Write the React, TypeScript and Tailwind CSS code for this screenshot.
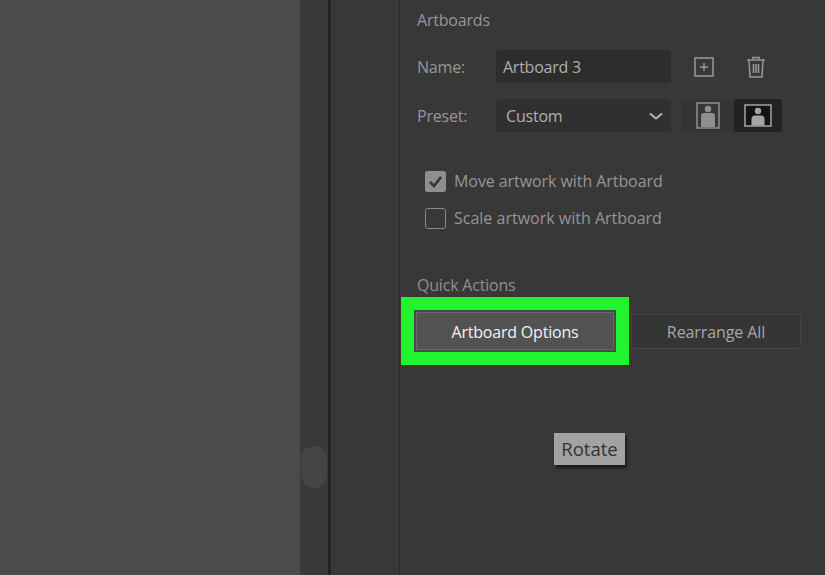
export default function App() {
  return (
    <div className="flex h-[575px] w-[825px] overflow-hidden bg-[#383838] font-['Open_Sans',sans-serif] text-[16px]">
      <div className="w-[300px] shrink-0 bg-[#4b4b4b]" />
      <div className="flex w-[28px] shrink-0 items-start bg-[#393939] pt-[446px]">
        <div className="ml-[1px] h-[42px] w-[26px] rounded-[13px] bg-[#444444]" />
      </div>
      <div className="w-[3px] shrink-0 bg-[#232323]" />
      <div className="w-[69px] shrink-0 border-r border-r-[#2a2a2a] bg-[#383838]" />
      <div className="relative flex min-w-0 flex-1 flex-col">
        <div className="pl-[17px] pt-[9px] leading-[22px] tracking-[-0.2px] text-[#969696]">Artboards</div>
        <div className="mt-[19px] flex h-[33px] items-center pl-[17px]">
          <span className="w-[79px] pt-[1px] tracking-[-0.2px] text-[#969696]">Name:</span>
          <div className="flex h-[33px] w-[175px] items-center rounded-[3px] bg-[#2d2d2d] pl-[7px] tracking-[-0.25px] text-[#b0b0b0]">Artboard 3</div>
          <svg className="ml-[22px]" width="22" height="22" viewBox="0 0 22 22" fill="none" stroke="#959595">
            <rect x="2" y="2" width="18" height="18" strokeWidth="1.6" />
            <path d="M11 7v8M7 11h8" strokeWidth="1.5" />
          </svg>
          <svg className="ml-[30px]" width="22" height="24" viewBox="0 0 22 24" fill="none" stroke="#959595" strokeWidth="1.6">
            <path d="M2 5h18M8 5V2.500h6V5M4 5l1 17h12l1-17M8.500 9v9M11 9v9M13.500 9v9" />
          </svg>
        </div>
        <div className="mt-[16px] flex h-[33px] items-center pl-[17px]">
          <span className="w-[79px] pt-[1px] tracking-[-0.2px] text-[#969696]">Preset:</span>
          <div className="flex h-[33px] w-[175px] items-center justify-between rounded-[3px] bg-[#303030] pl-[10px] pr-[8px] pt-[1px] tracking-[-0.2px] text-[#b0b0b0]">
            Custom
            <svg width="14" height="9" viewBox="0 0 14 9" fill="none" stroke="#b5b5b5" strokeWidth="2">
              <path d="M1 1.500l6 5 6-5" />
            </svg>
          </div>
          <div className="ml-[11px] flex h-[33px] w-[52px] items-center justify-center rounded-l-[3px] bg-[#343434]">
            <svg width="24" height="27" viewBox="0 0 24 27">
              <rect x="1" y="1" width="22" height="25" fill="#383838" stroke="#8f8f8f" strokeWidth="1.500" />
              <circle cx="12" cy="7" r="3.200" fill="#8f8f8f" />
              <path d="M5 25v-11q0-3 3-3h8q3 0 3 3v11z" fill="#8f8f8f" />
            </svg>
          </div>
          <div className="flex h-[33px] w-[48px] items-center justify-center rounded-[3px] bg-[#222222]">
            <svg width="28" height="23" viewBox="0 0 28 23">
              <rect x="1" y="1" width="26" height="21" fill="#141414" stroke="#a5a5a5" strokeWidth="1.500" />
              <circle cx="14" cy="7" r="3.200" fill="#a5a5a5" />
              <path d="M7.500 21.500v-6q0-4 3.500-4h6q3.500 0 3.500 4v6z" fill="#a5a5a5" />
            </svg>
          </div>
        </div>
        <div className="mt-[38px] flex h-[22px] items-center gap-[8px] pl-[25px] tracking-[-0.07px] text-[#969696]">
          <svg width="21" height="21" viewBox="0 0 21 21">
            <rect width="21" height="21" rx="2.500" fill="#8f8f8f" />
            <path d="M5 11l4 4 7-9" fill="none" stroke="#333333" strokeWidth="2.600" />
          </svg>
          Move artwork with Artboard
        </div>
        <div className="mt-[15px] flex h-[22px] items-center gap-[8px] pl-[25px] text-[#969696]">
          <div className="h-[21px] w-[21px] rounded-[3px] border border-[#8a8a8a]" />
          Scale artwork with Artboard
        </div>
        <div className="ml-[4px] mr-[22px] mt-[15px] h-px bg-[#3c3c3c]" />
        <div className="mt-[29px] pl-[17px] leading-[22px] tracking-[-0.2px] text-[#8f8f8f]">Quick Actions</div>
        <div className="mt-[1px] flex items-center">
          <div className="ml-[1px] bg-[#20f42f] p-[13px]">
            <div className="flex h-[42px] w-[202px] items-center justify-center border-[3px] border-[#484848] bg-[#525252] pt-[1px] tracking-[-0.2px] text-[#f2f2f2] outline outline-[1px] -outline-offset-[3px] outline-[#686868]">Artboard Options</div>
          </div>
          <div className="ml-[2px] flex h-[35px] w-[170px] items-center justify-center rounded-[3px] border border-[#454545] bg-[#353535] pt-[1px] tracking-[-0.1px] text-[#a8a8a8]">Rearrange All</div>
        </div>
        <div className="absolute left-[154px] top-[433px] flex h-[32px] w-[71px] items-center justify-center bg-[#a2a2a2] text-[18.500px] text-[#333333] shadow-[2px_3px_3px_rgba(0,0,0,0.6)]">Rotate</div>
      </div>
    </div>
  );
}
